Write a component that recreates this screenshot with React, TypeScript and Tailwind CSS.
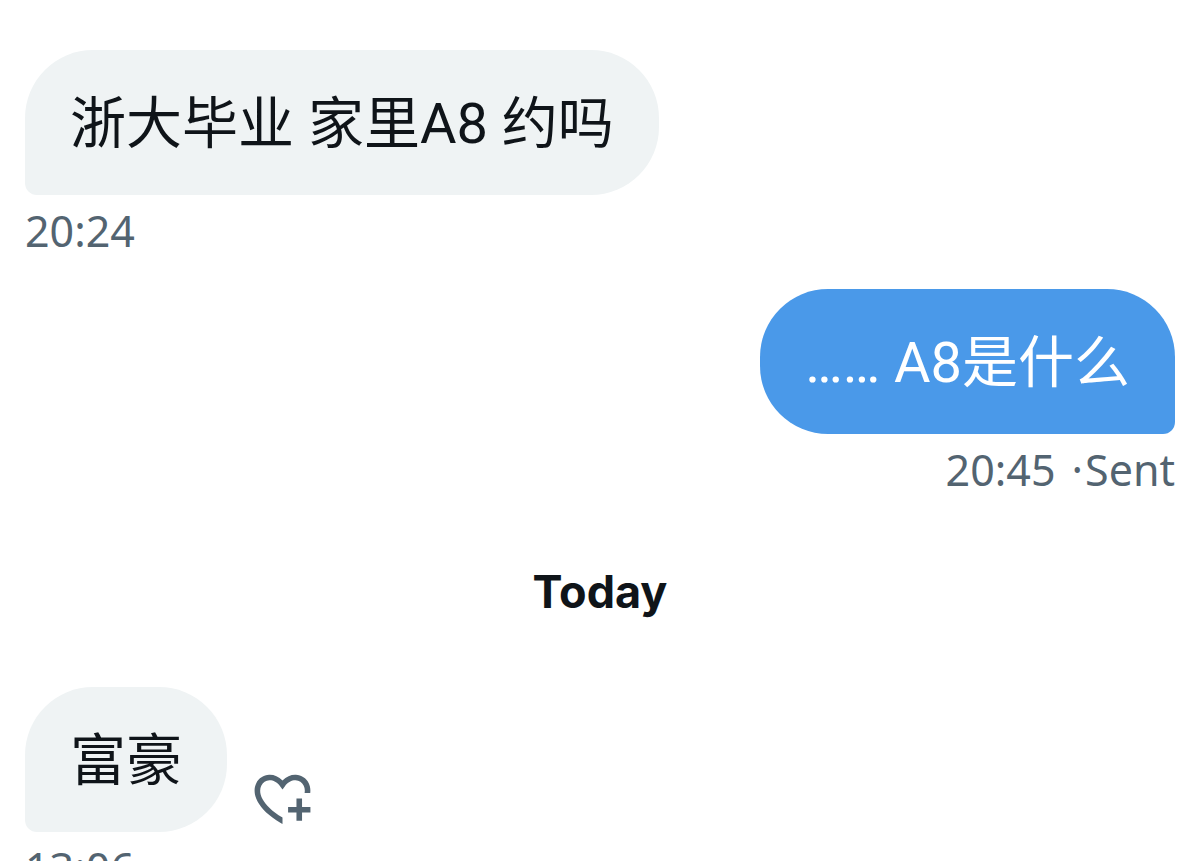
import clsx from "clsx";

type Message = {
  id: number;
  text: string;
  time: string;
  status?: string;
  mine?: boolean;
  canReact?: boolean;
};

const EARLIER: Message[] = [
  { id: 1, text: "浙大毕业 家里A8 约吗", time: "20:24" },
  { id: 2, text: "…… A8是什么", time: "20:45", status: "Sent", mine: true },
];

const TODAY: Message[] = [
  { id: 3, text: "富豪", time: "13:06", canReact: true },
];

function HeartPlusIcon() {
  return (
    <svg viewBox="0 0 24 24" className="size-[67px] fill-current" aria-hidden="true">
      <path d="M17 12v3h-2.998v2h3v3h2v-3h3v-2h-3.001v-3H17zm-5 6.839c-3.871-2.34-6.053-4.639-7.127-6.609-1.112-2.04-1.031-3.7-.479-4.82.561-1.13 1.667-1.84 2.91-1.91 1.222-.06 2.68.51 3.892 2.16l.806 1.09.805-1.09c1.211-1.65 2.668-2.22 3.89-2.16 1.242.07 2.347.78 2.908 1.91.334.677.49 1.554.321 2.59h2.011c.153-1.283-.039-2.469-.539-3.48-.887-1.79-2.647-2.91-4.601-3.01-1.65-.09-3.367.56-4.796 2.01-1.43-1.45-3.147-2.1-4.798-2.01-1.954.1-3.714 1.22-4.601 3.01-.896 1.81-.846 4.17.514 6.67 1.353 2.48 4.003 5.12 8.382 7.67l.502.299v-2.32z" />
    </svg>
  );
}

function MessageItem({ message }: { message: Message }) {
  const { text, time, status, mine, canReact } = message;

  return (
    <li className={clsx("flex flex-col", mine ? "items-end" : "items-start")}>
      <div className="flex items-end gap-[22px]">
        <p
          className={clsx(
            "rounded-[68px] px-[45px] pt-[38px] pb-[34px] text-[56px] leading-[73px]",
            mine
              ? "rounded-br-xl bg-[#4a99e9] text-white"
              : "rounded-bl-xl bg-[#eff3f4] text-[#0f1419]",
          )}
        >
          {text}
        </p>
        {canReact && (
          <button type="button" aria-label="React" className="text-[#536471]">
            <HeartPlusIcon />
          </button>
        )}
      </div>
      <div className="mt-1.5 flex font-['Noto_Sans',sans-serif] text-[43px] leading-[60px] text-[#536471]">
        <time>{time}</time>
        {status && (
          <>
            <span className="ml-4 mr-0.5">·</span>
            <span>{status}</span>
          </>
        )}
      </div>
    </li>
  );
}

function MessageList({ messages }: { messages: Message[] }) {
  return (
    <ul className="flex flex-col gap-7">
      {messages.map((message) => (
        <MessageItem key={message.id} message={message} />
      ))}
    </ul>
  );
}

export default function App() {
  return (
    <main
      lang="zh-CN"
      className="h-screen overflow-hidden bg-white px-[25px] pt-[50px] font-[Roboto,'Noto_Sans_CJK_SC',sans-serif]"
    >
      <MessageList messages={EARLIER} />
      <h2 className="mt-[60px] mb-16 text-center font-[Inter,sans-serif] text-[45px] leading-[63px] font-bold text-[#0f1419]">
        Today
      </h2>
      <MessageList messages={TODAY} />
    </main>
  );
}
